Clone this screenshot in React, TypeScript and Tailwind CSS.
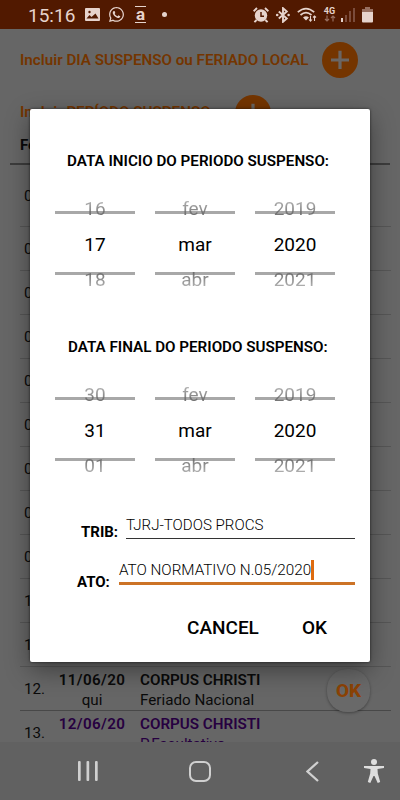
import { FaWhatsapp } from "react-icons/fa";

const rows = [
  "01.",
  "02.",
  "03.",
  "04.",
  "05.",
  "06.",
  "07.",
  "08.",
  "09.",
  "10.",
  "11.",
];

type PickerProps = { prev: string; value: string; next: string };

function PickerColumn({ prev, value, next }: PickerProps) {
  return (
    <div className="w-20 h-[94px] flex flex-col items-center text-[19px] leading-[22px] font-normal">
      <div className="relative w-full h-[17px] text-center">
        <span className="relative top-[1px] bg-linear-to-b from-[#c4c4c4] to-[#606060] bg-clip-text text-transparent">
          {prev}
        </span>
        <div className="absolute left-0 top-[14px] h-[2.5px] w-full bg-[#6e6e6e]/60" />
      </div>
      <div className="h-[54px] flex items-center pt-[7px] text-black">{value}</div>
      <div className="relative w-full h-[23px] text-center">
        <span className="relative top-[1px] bg-linear-to-b from-[#606060] to-[#c4c4c4] bg-clip-text text-transparent">
          {next}
        </span>
        <div className="absolute left-0 top-[4px] h-[2.5px] w-full bg-[#6e6e6e]/60" />
      </div>
    </div>
  );
}

function DatePicker({ columns }: { columns: PickerProps[] }) {
  return (
    <div className="flex gap-5 pl-[25px]">
      {columns.map((c) => (
        <PickerColumn key={c.value} {...c} />
      ))}
    </div>
  );
}

function AddButton() {
  return (
    <div className="w-9 h-9 rounded-full bg-[#743500] flex items-center justify-center shrink-0">
      <svg width="20" height="20" viewBox="0 0 20 20" fill="#6a6663">
        <path d="M8.4 .8h3.2v7.6H19v3.2h-7.4V19H8.400v-7.400H1V8.400h7.400z" />
      </svg>
    </div>
  );
}

function StatusBar() {
  return (
    <div className="h-[29px] shrink-0 bg-[#511900] flex items-center text-[#e6d3cc]">
      <span className="w-[56px] pl-[28px] pt-px text-[19px] leading-none whitespace-nowrap">
        15:16
      </span>
      {/* notifications */}
      <svg className="ml-[29px]" width="15" height="15" viewBox="0 0 15 15" fill="none">
        <rect y="1" width="15" height="13" rx="1" fill="currentColor" />
        <path d="M1.500 11.500l3-3.500 2 2 4-3.500 3 5z" fill="#511900" />
        <circle cx="4.500" cy="5" r="1.200" fill="#511900" />
      </svg>
      <FaWhatsapp className="ml-[8px]" size={17} />
      <div className="ml-[10px] w-[11px] h-[17px] border-y-[1.5px] border-[#e6d3cc] flex items-center justify-center text-[17px] font-bold leading-[10px] pb-[2px]">
        a
      </div>
      <div className="ml-[16px] w-[5px] h-[5px] rounded-full bg-[#e6d3cc]" />

      {/* system icons */}
      <div className="ml-[86px] flex items-center">
        <svg width="16" height="16" viewBox="0 0 16 16" fill="none">
          <circle cx="8" cy="8.500" r="6.200" fill="currentColor" />
          <path d="M.6 4.200L4 1M15.400 4.200L12 1M3.600 13l-2.200 2.200M12.400 13l2.200 2.200" stroke="currentColor" strokeWidth="1.900" />
          <path d="M8 5v4.200h3" stroke="#511900" strokeWidth="1.500" />
        </svg>
        <svg className="ml-[6px]" width="16" height="16" viewBox="0 0 16 16" fill="none">
          <path d="M3.800 4.500l8 7L8 14.800V1.200l3.800 3.300-8 7" stroke="currentColor" strokeWidth="1.900" />
          <circle cx="2.200" cy="8" r="1.300" fill="currentColor" />
          <circle cx="13.600" cy="8" r="1.300" fill="currentColor" />
        </svg>
        <svg className="ml-[6px]" width="20" height="16" viewBox="0 0 20 16" fill="none" stroke="currentColor">
          <path d="M.8 5.200Q9 -2 17.200 5.200M3.500 8Q9 3.200 14.500 8" strokeWidth="1.700" />
          <path d="M6 10.500Q9 8 12 10.500L9 13.500z" fill="currentColor" stroke="none" />
          <path d="M13.500 9v5M12 12.500l1.500 1.700 1.500-1.700M17.500 14V9M16 10.500L17.500 9l1.500 1.500" strokeWidth="1.100" />
        </svg>
        <div className="ml-[6px] w-[13px] flex flex-col items-center">
          <span className="text-[9px] leading-[8px] font-bold">4G</span>
          <svg width="12" height="7" viewBox="0 0 12 7" fill="none" stroke="#976f60">
            <path d="M3 .5v5.500M1 4l2 2 2-2M9 6.500V1M7 3l2-2 2 2" strokeWidth="1.200" />
          </svg>
        </div>
        <svg className="ml-[5px]" width="14" height="15" viewBox="0 0 14 15" fill="#7b4c3b">
          <rect y="11" width="2" height="4" fill="#e6d3cc" />
          <rect x="4" y="8" width="2" height="7" />
          <rect x="8" y="4" width="2" height="11" />
          <rect x="12" y="1" width="2" height="14" />
        </svg>
        <svg className="ml-[7px]" width="11" height="16" viewBox="0 0 11 16">
          <path d="M3 0h5v2h3v4H0V2h3z" fill="#976f60" />
          <path d="M0 5h11v9.500q0 1-1 1H1q-1 0-1-1z" fill="currentColor" />
        </svg>
      </div>
    </div>
  );
}

function NavBar() {
  return (
    <div className="h-[58px] shrink-0 bg-[#616161] flex items-center text-[#d0d0d0]">
      <svg className="ml-[78px]" width="20" height="20" viewBox="0 0 20 20" fill="currentColor">
        <rect width="2.700" height="20" rx="1" />
        <rect x="8.500" width="2.700" height="20" rx="1" />
        <rect x="17" width="2.700" height="20" rx="1" />
      </svg>
      <div className="ml-[91px] w-[22px] h-[21px] rounded-[7px] border-[2.500px] border-[#d0d0d0]" />
      <svg className="ml-[95px]" width="13" height="21" viewBox="0 0 13 21" fill="none" stroke="currentColor" strokeWidth="2.300">
        <path d="M12 1L1.500 10.500 12 20" />
      </svg>
      <svg className="ml-[45px]" width="20" height="24" viewBox="0 0 20 24" fill="#dedede">
        <circle cx="10" cy="3" r="3" />
        <path d="M0 7h20v2l-6.500 1 .3 4.500 2.400 8.500-2.500 1L10.500 17h-1L6.300 24l-2.500-1 2.400-8.500.3-4.500L0 9z" />
      </svg>
    </div>
  );
}

export default function App() {
  return (
    <div className="relative w-[400px] h-[800px] overflow-hidden flex flex-col bg-[#666666] font-[Roboto,sans-serif] text-[#0a0a0a]">
      <StatusBar />

      <main className="h-[713px] overflow-hidden flex flex-col">
        <div className="flex items-center gap-[14px] pl-5 pt-[13px] text-[#743500] text-[15.2px] font-semibold whitespace-nowrap">
          <span className="w-[288px]">Incluir DIA SUSPENSO ou FERIADO LOCAL</span>
          <AddButton />
        </div>
        <div className="flex items-center pl-5 pt-[17px] text-[#743500] text-[15.2px] font-semibold whitespace-nowrap">
          <span className="w-[215px] pb-px">Incluir PERÍODO SUSPENSO</span>
          <AddButton />
        </div>
        <div className="mx-[10px] h-[34px] shrink-0 border-b-2 border-[#3c3c3c] pl-[10px] pt-[3px] text-[15px] font-bold">
          Feriados
        </div>
        <div className="ml-5 mr-[9px] flex flex-col text-[15.2px]">
          {rows.map((n, i) => (
            <div
              key={n}
              className={`shrink-0 flex items-center pl-1 pt-[2px] border-b border-[#565656] ${i === 0 ? "h-[62px]" : "h-[44px]"}`}
            >
              {n}
            </div>
          ))}
          <div className="relative h-[44px] shrink-0 flex items-center pl-1 pt-[3px] border-b border-[#484848]">
            <span className="w-[31px] pb-px">12.</span>
            <div className="w-[74px] text-center leading-5">
              <div className="font-semibold tracking-[0.35px]">11/06/20</div>
              <div>qui</div>
            </div>
            <div className="pl-[11px] leading-5">
              <div className="font-semibold">CORPUS CHRISTI</div>
              <div>Feriado Nacional</div>
            </div>
            <div className="absolute left-[307px] top-[2px] w-[43px] h-[43px] rounded-[20px] bg-[#696969] shadow-[0_1px_3px_rgba(0,0,0,0.35)] flex items-center justify-center pt-[2px] text-[#8c4205] text-[19px] font-extrabold">
              OK
            </div>
          </div>
          <div className="h-[44px] shrink-0 flex pl-1">
            <span className="w-[31px] pt-[11px]">13.</span>
            <div className="w-[74px] pt-[3px] text-center leading-5 text-[#260040] font-semibold tracking-[0.35px]">
              12/06/20
            </div>
            <div className="pl-[11px] pt-[3px] leading-5 text-[#260040]">
              <div className="font-semibold">CORPUS CHRISTI</div>
              <div>P.Facultativo</div>
            </div>
          </div>
        </div>
      </main>

      <NavBar />

      {/* dialog */}
      <div className="absolute left-[30px] top-[109px] w-[340px] h-[553px] rounded-[2px] bg-white shadow-[0_8px_24px_rgba(0,0,0,0.4),0_0_3px_rgba(0,0,0,0.6)] text-black">
        <h2 className="pt-[42px] pl-[37px] h-[88px] text-[15.2px] leading-5 font-semibold whitespace-nowrap">
          DATA INICIO DO PERIODO SUSPENSO:
        </h2>
        <DatePicker
          columns={[
            { prev: "16", value: "17", next: "18" },
            { prev: "fev", value: "mar", next: "abr" },
            { prev: "2019", value: "2020", next: "2021" },
          ]}
        />
        <h2 className="pt-[46px] pl-[38px] h-[92px] text-[15.2px] leading-5 font-semibold whitespace-nowrap">
          DATA FINAL DO PERIODO SUSPENSO:
        </h2>
        <DatePicker
          columns={[
            { prev: "30", value: "31", next: "01" },
            { prev: "fev", value: "mar", next: "abr" },
            { prev: "2019", value: "2020", next: "2021" },
          ]}
        />
        <div className="flex pl-[51px] pt-[37px] h-[76px]">
          <span className="w-[45px] pt-[8px] text-[15px] leading-5 font-bold">TRIB:</span>
          <div className="w-[229px] h-[25px] border-b border-[#333] pt-px text-[15.1px] leading-5 font-light whitespace-nowrap">
            TJRJ-TODOS PROCS
          </div>
        </div>
        <div className="flex pl-[47px] h-[59px]">
          <span className="w-[42px] pt-[19px] text-[15px] leading-5 font-bold">ATO:</span>
          <div className="w-[236px] h-[32px] border-b-[3px] border-[#cc7326] flex items-center pt-[5px] text-[15.25px] font-light whitespace-nowrap">
            ATO NORMATIVO N.05/2020
            <span className="w-[2.500px] h-5 bg-[#dd6b10]" />
          </div>
        </div>
        <div className="flex pl-[157px] pt-[2px] text-[19px] font-medium">
          <button className="w-[115px] text-left">CANCEL</button>
          <button>OK</button>
        </div>
      </div>
    </div>
  );
}
